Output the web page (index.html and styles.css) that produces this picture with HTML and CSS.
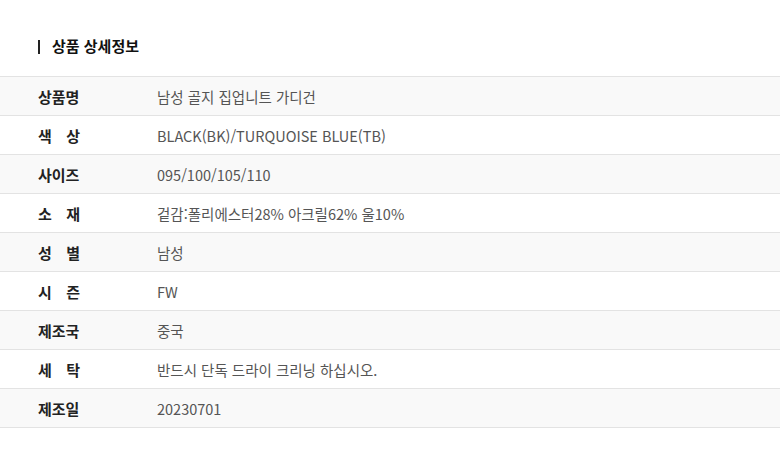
FILE: index.html
```html
<!DOCTYPE html>
<html lang="ko">
<head>
<meta charset="utf-8">
<link rel="stylesheet" href="styles.css">
</head>
<body>
<section class="detail">
  <h2 class="title">상품 상세정보</h2>
  <div class="table">
    <div class="row alt"><div class="label">상품명</div><div class="value">남성 골지 집업니트 가디건</div></div>
    <div class="row"><div class="label">색 상</div><div class="value">BLACK(BK)/TURQUOISE BLUE(TB)</div></div>
    <div class="row alt"><div class="label">사이즈</div><div class="value">095/100/105/110</div></div>
    <div class="row"><div class="label">소 재</div><div class="value">겉감:폴리에스터28% 아크릴62% 울10%</div></div>
    <div class="row alt"><div class="label">성 별</div><div class="value">남성</div></div>
    <div class="row"><div class="label">시 즌</div><div class="value">FW</div></div>
    <div class="row alt"><div class="label">제조국</div><div class="value">중국</div></div>
    <div class="row"><div class="label">세 탁</div><div class="value">반드시 단독 드라이 크리닝 하십시오.</div></div>
    <div class="row alt"><div class="label">제조일</div><div class="value">20230701</div></div>
  </div>
</section>
</body>
</html>
```
FILE: styles.css
```css
html, body {
  margin: 0;
  padding: 0;
  background: #fff;
}
body {
  font-family: "Noto Sans CJK KR", "Noto Sans", sans-serif;
  color: #222;
}
.detail {
  padding-top: 36px;
}
.title {
  position: relative;
  margin: 0 0 20px 52px;
  font-size: 15px;
  font-weight: 700;
  line-height: 20px;
  height: 20px;
  color: #111;
}
.title::before {
  content: "";
  position: absolute;
  left: -14px;
  top: 4px;
  width: 2px;
  height: 14px;
  background: #222;
}
.table {
  border-top: 1px solid #e3e3e3;
}
.row {
  display: flex;
  align-items: center;
  height: 38px;
  border-bottom: 1px solid #e3e3e3;
  background: #fff;
}
.row.alt {
  background: #f9f9f9;
}
.label {
  width: 42px;
  margin-left: 38px;
  margin-right: 77px;
  font-size: 15px;
  font-weight: 700;
  color: #222;
  text-align: justify;
  text-align-last: justify;
  white-space: nowrap;
}
.value {
  font-size: 14.5px;
  color: #555;
}
```
